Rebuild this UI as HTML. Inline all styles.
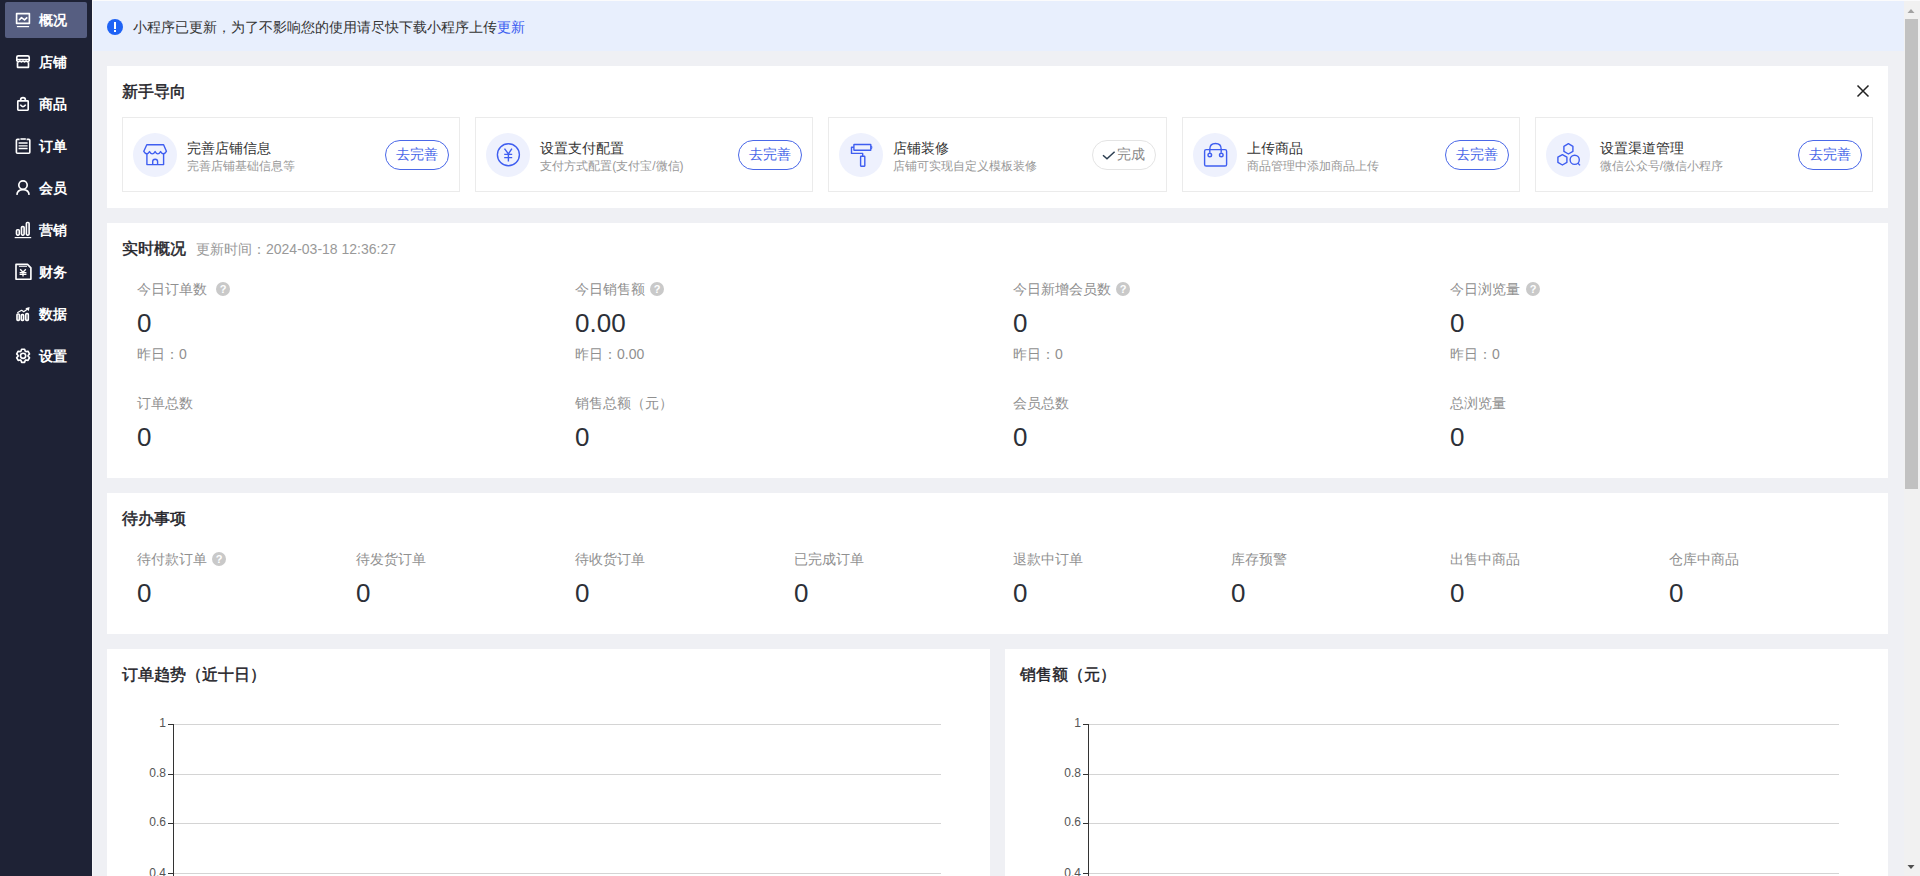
<!DOCTYPE html>
<html><head><meta charset="utf-8">
<style>
*{box-sizing:border-box;margin:0;padding:0}
html,body{width:1920px;height:876px;overflow:hidden}
body{position:relative;background:#eff0f4;font-family:"Liberation Sans",sans-serif;color:#333}
.abs{position:absolute}
#side{left:0;top:0;width:92px;height:876px;background:#1e2235}
.navt{position:absolute;left:39px;height:36px;line-height:36px;color:#fff;font-size:14px;font-weight:bold;white-space:nowrap}
#topline{left:92px;top:0;width:1828px;height:1px;background:#fbfbfc}
#leftline{left:92px;top:0;width:1px;height:876px;background:#f6f7f9}
#banner{left:93px;top:1px;width:1811px;height:50px;background:#e8effd}
.card{position:absolute;background:#fff}
.ttl{position:absolute;font-size:16px;font-weight:normal;-webkit-text-stroke:0.45px #1f2329;color:#1f2329;line-height:20px;white-space:nowrap}
.sub{position:absolute;top:117px;width:338px;height:75px;border:1px solid #ebebeb;background:#fff}
.sub .ic{position:absolute;left:10px;top:15px;width:44px;height:44px;border-radius:50%;background:#eef1fd}
.sub .ic svg{position:absolute;left:7px;top:7px;width:30px;height:30px}
.sub .t1{position:absolute;left:64px;top:21px;font-size:14px;line-height:18px;color:#333;white-space:nowrap}
.sub .t2{position:absolute;left:64px;top:40px;font-size:12px;line-height:16px;color:#999;white-space:nowrap}
.btn{position:absolute;right:10px;top:22px;width:64px;height:30px;border:1px solid #4a68e8;border-radius:15px;color:#4a68e8;font-size:13.5px;line-height:28px;text-align:center}
.btn.done{border-color:#e4e4e4;color:#8a8a8a}
.lab{position:absolute;font-size:14px;color:#909090;line-height:18px;white-space:nowrap}
.val{position:absolute;font-size:26px;color:#2c3038;line-height:30px;white-space:nowrap}
.yd{position:absolute;font-size:14px;color:#909090;line-height:18px;white-space:nowrap}
.qa{position:absolute;width:14px;height:14px;border-radius:50%;background:#c9c9c9;color:#fff;font-size:11px;line-height:14px;text-align:center;font-weight:bold}
.ax{position:absolute;font-size:12px;color:#555;line-height:14px;text-align:right;width:42px}
#sb{left:1904px;top:1px;width:16px;height:876px;background:#f1f1f1}
#thumb{left:1905px;top:19px;width:13px;height:470px;background:#c1c1c1}
</style></head><body>

<div id="side" class="abs">
  <div class="abs" style="left:5px;top:2px;width:82px;height:36px;border-radius:2px;background:#565e81"></div>
  <svg class="abs" style="left:12px;top:8px" width="24" height="24" viewBox="0 0 24 24" fill="none" stroke="#fff" stroke-width="1.65" stroke-linejoin="round"><rect x="4.6" y="5.6" width="12.8" height="9.8"/><path d="M7 12.2l2.5-2.6 3 2.2 2.8-2.5"/><path d="M4.9 18.6h12.2" stroke-width="1.2"/></svg>
  <div class="navt" style="top:2px">概况</div>
  <svg class="abs" style="left:12px;top:50px" width="24" height="24" viewBox="0 0 24 24" fill="none" stroke="#fff" stroke-width="1.65" stroke-linejoin="round"><path d="M4.8 11V7.3Q4.8 5.8 6.3 5.8H15.7Q17.2 5.8 17.2 7.3V11"/><path d="M4.8 9.6H17.2"/><path d="M4.8 11q1.55 1.6 3.1 0q1.55 1.6 3.1 0q1.55 1.6 3.1 0q1.55 1.6 3.1 0"/><path d="M5.5 12.2V17.3H16.5V12.2"/></svg>
  <div class="navt" style="top:44px">店铺</div>
  <svg class="abs" style="left:12px;top:92px" width="24" height="24" viewBox="0 0 24 24" fill="none" stroke="#fff" stroke-width="1.65" stroke-linejoin="round"><rect x="5.8" y="8.9" width="10.4" height="9.3" rx="0.6"/><path d="M8.6 8.9V8Q8.6 5.6 11 5.6T13.4 8V8.9"/><path d="M8.3 12.6Q11 16.6 13.7 12.6"/></svg>
  <div class="navt" style="top:86px">商品</div>
  <svg class="abs" style="left:12px;top:134px" width="24" height="24" viewBox="0 0 24 24" fill="none" stroke="#fff" stroke-width="1.65" stroke-linejoin="round"><path d="M7.6 5.3H5.4Q4.4 5.3 4.4 6.3V18.2Q4.4 19.2 5.4 19.2H16.8Q17.8 19.2 17.8 18.2V6.3Q17.8 5.3 16.8 5.3H14.6"/><rect x="8.4" y="4.2" width="5.4" height="1.6" fill="#fff" stroke="none"/><path d="M6.6 9H15.6M6.6 11.8H15.6M6.6 14.5H15.6" stroke-width="1.3"/></svg>
  <div class="navt" style="top:128px">订单</div>
  <svg class="abs" style="left:12px;top:176px" width="24" height="24" viewBox="0 0 24 24" fill="none" stroke="#fff" stroke-width="1.65" stroke-linejoin="round"><circle cx="11" cy="9" r="4.2"/><path d="M4.9 18.9Q5.2 13.6 11 13.6T17.1 18.9"/></svg>
  <div class="navt" style="top:170px">会员</div>
  <svg class="abs" style="left:12px;top:218px" width="24" height="24" viewBox="0 0 24 24" fill="none" stroke="#fff" stroke-width="1.65" stroke-linejoin="round"><rect x="4.5" y="11.7" width="2.8" height="5.4" rx="1"/><rect x="9.5" y="8.6" width="2.6" height="8.5" rx="1"/><rect x="14.4" y="4.5" width="2.7" height="12.6" rx="1"/><path d="M2.7 19.6H19.2" stroke-width="1.2"/></svg>
  <div class="navt" style="top:212px">营销</div>
  <svg class="abs" style="left:12px;top:260px" width="24" height="24" viewBox="0 0 24 24" fill="none" stroke="#fff" stroke-width="1.65" stroke-linejoin="round"><path d="M4 4.4H15.5L18.9 7.8V19.2H4Z"/><path d="M6.9 6.3H15" stroke-width="1"/><path d="M8.2 9.3L11 12.3L13.8 9.3M11 12.3V16.6M7.6 12.6H14.4M7.6 14.4H14.4" stroke-width="1.3"/></svg>
  <div class="navt" style="top:254px">财务</div>
  <svg class="abs" style="left:12px;top:302px" width="24" height="24" viewBox="0 0 24 24" fill="none" stroke="#fff" stroke-width="1.65" stroke-linejoin="round"><rect x="5" y="12" width="2.3" height="6.4" rx="0.8"/><rect x="9.3" y="12.6" width="2.3" height="5.8" rx="0.8"/><rect x="13.8" y="11.6" width="2.5" height="6.8" rx="0.8"/><path d="M5.3 10.8L9.6 8.3L11.8 9.8L15.2 7.2" stroke-width="1.3"/><path d="M13.3 6.2L17.6 5L16.9 9.1Z" fill="#fff" stroke="none"/></svg>
  <div class="navt" style="top:296px">数据</div>
  <svg class="abs" style="left:12px;top:344px" width="24" height="24" viewBox="0 0 24 24" fill="none" stroke="#fff" stroke-width="1.65" stroke-linejoin="round"><path d="M8.91 7.31 L9.59 5.27 L12.61 5.27 L13.29 7.31 L13.90 7.65 L16.00 7.23 L17.51 9.84 L16.09 11.45 L16.09 12.15 L17.51 13.76 L16.00 16.37 L13.90 15.95 L13.29 16.29 L12.61 18.33 L9.59 18.33 L8.91 16.29 L8.30 15.95 L6.20 16.37 L4.69 13.76 L6.11 12.15 L6.11 11.45 L4.69 9.84 L6.20 7.23 L8.30 7.65Z"/><circle cx="11.1" cy="11.8" r="2.6"/></svg>
  <div class="navt" style="top:338px">设置</div>
</div>

<div id="topline" class="abs"></div>
<div id="leftline" class="abs"></div>
<div id="banner" class="abs">
  <div class="abs" style="left:14px;top:18px;width:16px;height:16px;border-radius:50%;background:#1f63f5"></div>
  <div class="abs" style="left:21px;top:21px;width:2px;height:7px;background:#fff"></div>
  <div class="abs" style="left:21px;top:29px;width:2px;height:2px;background:#fff"></div>
  <div class="abs" style="left:40px;top:16px;font-size:14px;line-height:20px;color:#333;white-space:nowrap">小程序已更新，为了不影响您的使用请尽快下载小程序上传<span style="color:#3a5cf0">更新</span></div>
</div>

<!-- guide -->
<div class="card" style="left:107px;top:66px;width:1781px;height:142px"></div>
<div class="ttl" style="left:122px;top:82px">新手导向</div>
<svg class="abs" style="left:1856px;top:84px" width="14" height="14" viewBox="0 0 14 14" stroke="#222" stroke-width="1.5"><path d="M1.5 1.5l11 11M12.5 1.5l-11 11"/></svg>

<div class="sub" style="left:122px;width:338.2px">
  <div class="ic"><svg viewBox="0 0 30 30" fill="none" stroke="#3f5ef0" stroke-width="1.4" stroke-linejoin="round"><path d="M6.8 4.8H23.6L26.4 11.3Q23.5 16.1 20.6 11.6Q17.8 16.1 15.1 11.6Q12.3 16.1 9.5 11.6Q6.6 16.1 3.8 11.3Z"/><path d="M6.9 13V24.6H23.6V13"/><path d="M12.7 24.6V21.6Q12.7 19.2 15.15 19.2T17.6 21.6V24.6"/></svg></div>
  <div class="t1">完善店铺信息</div><div class="t2">完善店铺基础信息等</div>
  <div class="btn">去完善</div>
</div>
<div class="sub" style="left:475.2px;width:338.2px">
  <div class="ic"><svg viewBox="0 0 30 30" fill="none" stroke="#3f5ef0" stroke-width="1.4" stroke-linejoin="round"><circle cx="15.4" cy="14.75" r="11"/><path d="M11.5 8.6L15.4 13.8L18.9 8.6M15.4 13.8V21.6M11.2 14.4H19.2M11.2 17.6H19.2"/></svg></div>
  <div class="t1">设置支付配置</div><div class="t2">支付方式配置(支付宝/微信)</div>
  <div class="btn">去完善</div>
</div>
<div class="sub" style="left:828.4px;width:338.2px">
  <div class="ic"><svg viewBox="0 0 30 30" fill="none" stroke="#3f5ef0" stroke-width="1.4" stroke-linejoin="round"><rect x="7.9" y="4.5" width="16.9" height="5.8" rx="0.3"/><path d="M24.8 6.4H25.8V8.4H24.8" stroke-width="1"/><path d="M7.9 7.2H5.5V13.4H16.7V16.3"/><rect x="14.6" y="16.3" width="4.2" height="9.9" rx="0.4"/></svg></div>
  <div class="t1">店铺装修</div><div class="t2">店铺可实现自定义模板装修</div>
  <div class="btn done"><svg class="abs" style="left:9px;top:10px" width="14" height="10" viewBox="0 0 14 10" fill="none" stroke="#2c3e50" stroke-width="1.5"><path d="M1 4.2L5 7.8L12.6 0.8"/></svg><span class="abs" style="left:24px;top:0">完成</span></div>
</div>
<div class="sub" style="left:1181.6px;width:338.2px">
  <div class="ic"><svg viewBox="0 0 30 30" fill="none" stroke="#3f5ef0" stroke-width="1.4" stroke-linejoin="round"><rect x="4.6" y="9.6" width="22" height="16.4" rx="1.6"/><path d="M9.8 12.8V9.2Q9.8 3.5 15.5 3.5T21.2 9.2V12.8"/><circle cx="9.8" cy="15" r="1.8"/><circle cx="21.3" cy="15" r="1.8"/></svg></div>
  <div class="t1">上传商品</div><div class="t2">商品管理中添加商品上传</div>
  <div class="btn">去完善</div>
</div>
<div class="sub" style="left:1534.8px;width:338.2px">
  <div class="ic"><svg viewBox="0 0 30 30" fill="none" stroke="#3f5ef0" stroke-width="1.4" stroke-linejoin="round"><path d="M15.4 3.7L19.9 6.3V11.4L15.4 14L10.9 11.4V6.3Z"/><path d="M9.4 14.6L13.9 17.2V22.4L9.4 25L4.9 22.4V17.2Z"/><circle cx="21.7" cy="19.8" r="4.6"/><path d="M24.9 23.1L27 25.4"/></svg></div>
  <div class="t1">设置渠道管理</div><div class="t2">微信公众号/微信小程序</div>
  <div class="btn">去完善</div>
</div>

<!-- realtime -->
<div class="card" style="left:107px;top:223px;width:1781px;height:255px"></div>
<div class="ttl" style="left:122px;top:239px">实时概况</div>
<div class="abs" style="left:196px;top:240px;font-size:14px;line-height:18px;color:#999;white-space:nowrap">更新时间：2024-03-18 12:36:27</div>

<div class="lab" style="left:137px;top:280px">今日订单数</div>
<div class="val" style="left:137px;top:308px">0</div>
<div class="yd" style="left:137px;top:345px">昨日：0</div>
<div class="lab" style="left:575px;top:280px">今日销售额</div>
<div class="val" style="left:575px;top:308px">0.00</div>
<div class="yd" style="left:575px;top:345px">昨日：0.00</div>
<div class="lab" style="left:1013px;top:280px">今日新增会员数</div>
<div class="val" style="left:1013px;top:308px">0</div>
<div class="yd" style="left:1013px;top:345px">昨日：0</div>
<div class="lab" style="left:1450px;top:280px">今日浏览量</div>
<div class="val" style="left:1450px;top:308px">0</div>
<div class="yd" style="left:1450px;top:345px">昨日：0</div>

<div class="lab" style="left:137px;top:394px">订单总数</div>
<div class="val" style="left:137px;top:422px">0</div>
<div class="lab" style="left:575px;top:394px">销售总额（元）</div>
<div class="val" style="left:575px;top:422px">0</div>
<div class="lab" style="left:1013px;top:394px">会员总数</div>
<div class="val" style="left:1013px;top:422px">0</div>
<div class="lab" style="left:1450px;top:394px">总浏览量</div>
<div class="val" style="left:1450px;top:422px">0</div>

<!-- todo -->
<div class="card" style="left:107px;top:493px;width:1781px;height:141px"></div>
<div class="ttl" style="left:122px;top:509px">待办事项</div>
<div class="lab" style="left:137px;top:550px">待付款订单</div>
<div class="val" style="left:137px;top:578px">0</div>
<div class="lab" style="left:356px;top:550px">待发货订单</div>
<div class="val" style="left:356px;top:578px">0</div>
<div class="lab" style="left:575px;top:550px">待收货订单</div>
<div class="val" style="left:575px;top:578px">0</div>
<div class="lab" style="left:794px;top:550px">已完成订单</div>
<div class="val" style="left:794px;top:578px">0</div>
<div class="lab" style="left:1013px;top:550px">退款中订单</div>
<div class="val" style="left:1013px;top:578px">0</div>
<div class="lab" style="left:1231px;top:550px">库存预警</div>
<div class="val" style="left:1231px;top:578px">0</div>
<div class="lab" style="left:1450px;top:550px">出售中商品</div>
<div class="val" style="left:1450px;top:578px">0</div>
<div class="lab" style="left:1669px;top:550px">仓库中商品</div>
<div class="val" style="left:1669px;top:578px">0</div>

<div class="qa" style="left:216px;top:282px">?</div>
<div class="qa" style="left:650px;top:282px">?</div>
<div class="qa" style="left:1116px;top:282px">?</div>
<div class="qa" style="left:1526px;top:282px">?</div>
<div class="qa" style="left:212px;top:552px">?</div>
<!-- charts -->
<div class="card" style="left:107px;top:649px;width:883px;height:240px"></div>
<div class="ttl" style="left:122px;top:665px">订单趋势（近十日）</div>
<div class="card" style="left:1005px;top:649px;width:883px;height:240px"></div>
<div class="ttl" style="left:1020px;top:665px">销售额（元）</div>

<svg class="abs" style="left:0;top:0" width="1920" height="876">
  <g stroke="#d4d4d4" stroke-width="1">
    <path d="M174 724.5H941M174 774.5H941M174 823.5H941M174 873.5H941"/>
    <path d="M1089 724.5H1839M1089 774.5H1839M1089 823.5H1839M1089 873.5H1839"/>
  </g>
  <g stroke="#333" stroke-width="1">
    <path d="M173.5 724V876M168 724.5H173M168 774.5H173M168 823.5H173M168 873.5H173"/>
    <path d="M1088.5 724V876M1083 724.5H1088M1083 774.5H1088M1083 823.5H1088M1083 873.5H1088"/>
  </g>
</svg>
<div class="ax" style="left:124px;top:716px">1</div>
<div class="ax" style="left:124px;top:766px">0.8</div>
<div class="ax" style="left:124px;top:815px">0.6</div>
<div class="ax" style="left:124px;top:866px">0.4</div>
<div class="ax" style="left:1039px;top:716px">1</div>
<div class="ax" style="left:1039px;top:766px">0.8</div>
<div class="ax" style="left:1039px;top:815px">0.6</div>
<div class="ax" style="left:1039px;top:866px">0.4</div>

<div id="sb" class="abs"></div>
<div id="thumb" class="abs"></div>
<svg class="abs" style="left:1903px;top:0" width="17" height="876"><path d="M8 9l3.5 4h-7z" fill="#a3a3a3"/><path d="M4.5 865h7L8 869z" fill="#505050"/></svg>
</body></html>
